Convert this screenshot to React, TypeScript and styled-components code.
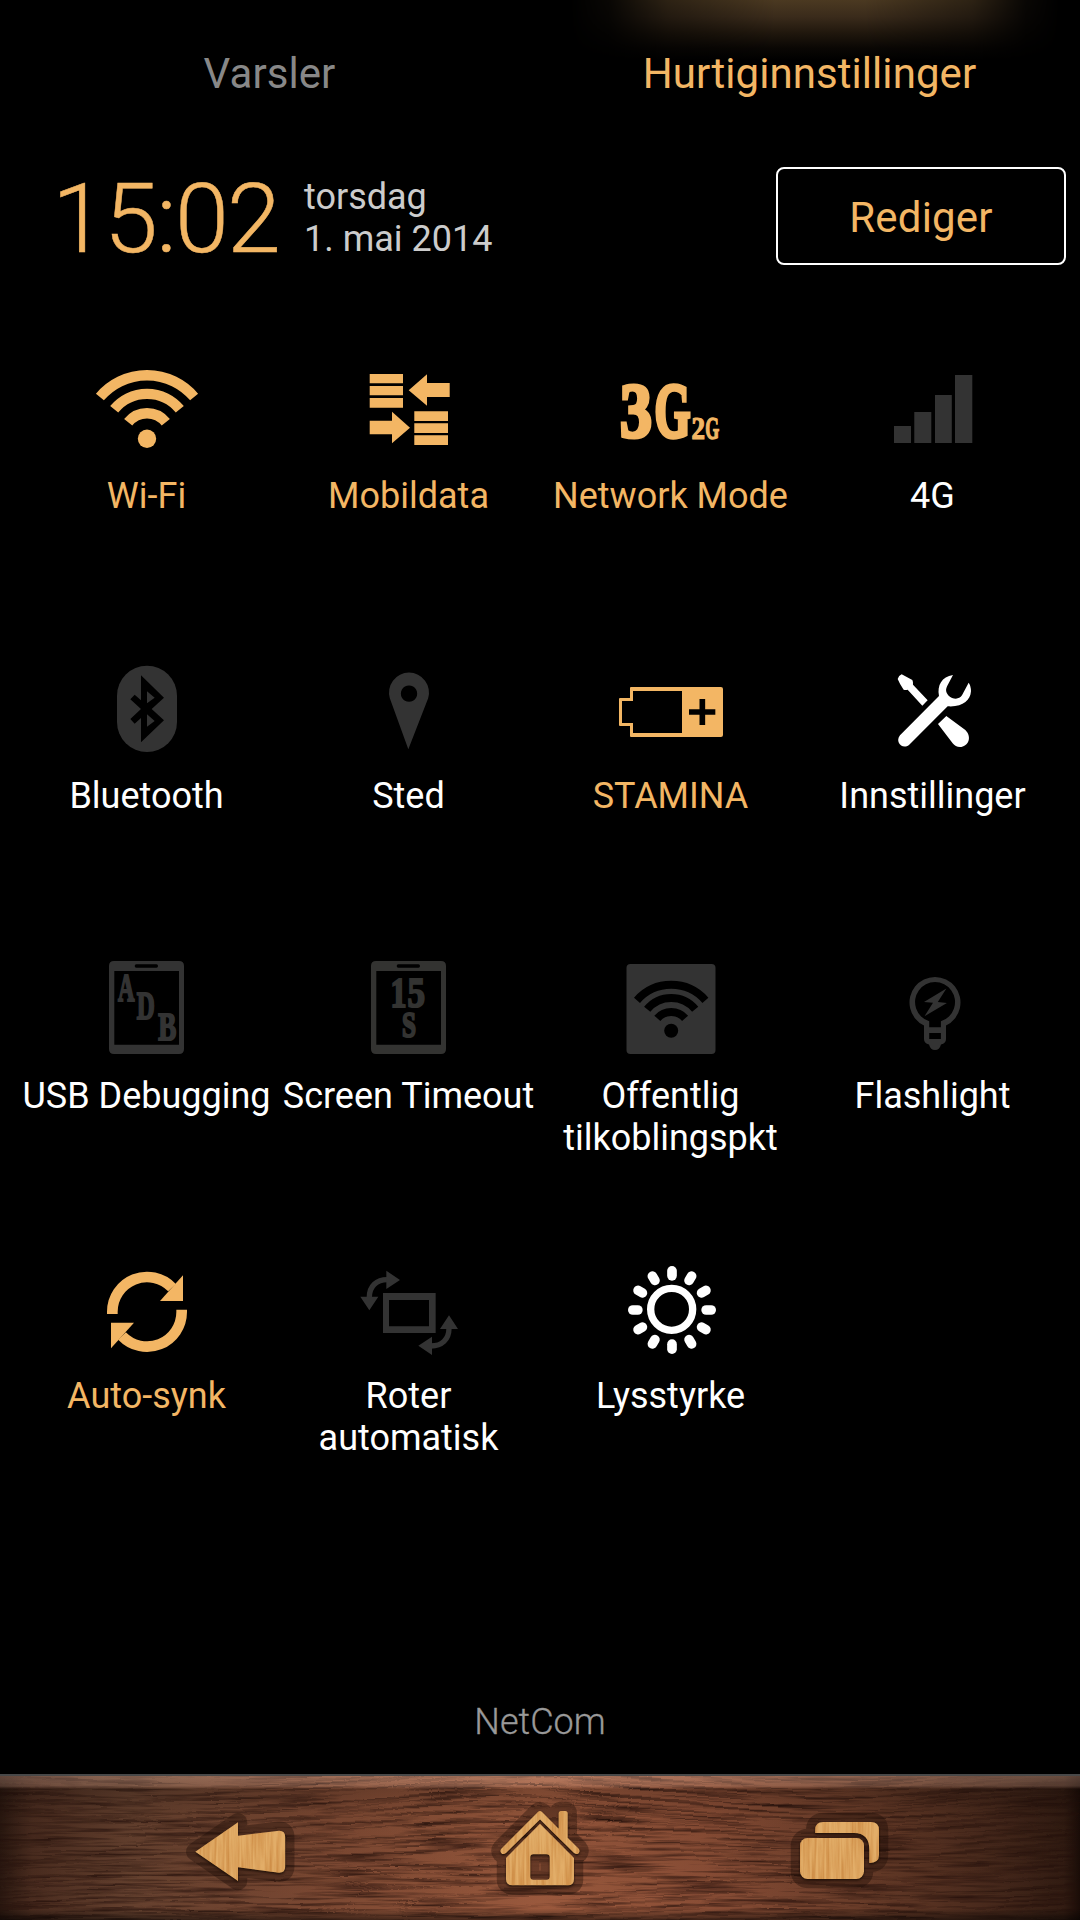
import React from 'react';
import styled, { createGlobalStyle } from 'styled-components';

const AMBER = '#f3b664';
const DIM = '#333333';
const WHITE = '#ffffff';

const GlobalStyle = createGlobalStyle`
  * { box-sizing: border-box; }
  body { margin: 0; background: #000; }
`;

const Screen = styled.div`
  display: flex;
  flex-direction: column;
  width: 1080px;
  height: 1920px;
  overflow: hidden;
  background: #000;
  color: ${WHITE};
  font-family: Roboto, 'Noto Sans', sans-serif;
  font-size: 36px;
  line-height: 42px;
`;

const Tabs = styled.nav`
  display: grid;
  grid-template-columns: 1fr 1fr;
  height: 147px;
`;

const Tab = styled.div<{ $active?: boolean }>`
  position: relative;
  display: flex;
  justify-content: center;
  padding: 49px 1px 0 0;
  font-size: 42px;
  line-height: 50px;
  color: ${(p) => (p.$active ? AMBER : '#888888')};
`;

const Glow = styled.span`
  position: absolute;
  top: 0;
  left: 30px;
  width: 490px;
  height: 60px;
  background: linear-gradient(to bottom, #4b3921 0%, #3a2b1b 28%, #20170d 55%, #0a0704 80%, #000 100%);
  mask-image: linear-gradient(to right, transparent, rgba(0, 0, 0, 0.12) 8%, rgba(0, 0, 0, 0.6) 20%, #000 42%, #000 60%, rgba(0, 0, 0, 0.6) 82%, rgba(0, 0, 0, 0.12) 93%, transparent);
`;

const TabText = styled.span`
  position: relative;
  letter-spacing: 0.07px;
`;

const Header = styled.header`
  display: flex;
  align-items: center;
  height: 138px;
  padding: 0 14px 0 52px;
`;

const Clock = styled.div`
  width: 252px;
  padding-top: 6px;
  font-size: 97px;
  font-weight: 300;
  line-height: 114px;
  letter-spacing: -1.7px;
  -webkit-text-stroke: 0.5px ${AMBER};
  color: ${AMBER};
`;

const DateText = styled.div`
  flex: 1;
  padding-top: 4px;
  color: #cccccc;
`;

const EditButton = styled.button`
  width: 290px;
  height: 98px;
  padding: 3px 0 0;
  border: 2px solid ${WHITE};
  border-radius: 8px;
  background: none;
  color: ${AMBER};
  font: inherit;
  font-size: 42px;
  letter-spacing: 0.2px;
`;

const Grid = styled.main`
  display: grid;
  grid-template-columns: repeat(4, 262px);
  grid-auto-rows: 300px;
  padding: 65px 16px 0;
  flex: 1;
`;

const Tile = styled.div<{ $color: string }>`
  display: flex;
  flex-direction: column;
  align-items: center;
  gap: 5px;
  color: ${(p) => p.$color};
`;

const TileLabel = styled.div`
  padding-right: 1px;
  text-align: center;
  white-space: pre;
`;

const TileIcon = styled.svg<{ $color: string }>`
  display: block;
  width: 120px;
  height: 120px;
  color: ${(p) => p.$color};
  fill: currentColor;
`;

const Carrier = styled.footer`
  height: 73px;
  text-align: center;
  font-weight: 300;
  -webkit-text-stroke: 0.3px #999999;
  color: #999999;
`;

const NavBar = styled.nav`
  position: relative;
  height: 146px;
  border-top: 2px solid #484848;
  display: grid;
  grid-template-columns: repeat(3, 300px);
  justify-content: center;
  align-items: center;
  justify-items: center;
`;

const WoodPanel = styled.svg`
  position: absolute;
  inset: 0;
  width: 1080px;
  height: 144px;
`;

const NavIcon = styled.svg`
  position: relative;
  width: 120px;
  height: 120px;
  overflow: visible;
`;

interface LetterProps {
  x: number;
  y: number;
  size: number;
  width: number;
  weight?: number;
  children: string;
}

const Letter = ({ x, y, size, width, weight = 2.2, children }: LetterProps) => (
  <text
    x={x}
    y={y}
    fontFamily="'Liberation Serif', serif"
    fontWeight={700}
    fontSize={size}
    textLength={width}
    lengthAdjust="spacingAndGlyphs"
    stroke="currentColor"
    strokeWidth={weight}
  >
    {children}
  </text>
);

const WifiIcon = () => (
  <>
    <g fill="none" stroke="currentColor" strokeWidth="10.4">
      <path d="M12.9 47A61.8 61.8 0 0 1 107.1 47" />
      <path d="M27.2 59.3A42.5 42.5 0 0 1 92.8 59.3" />
      <path d="M41.2 72.3A24 24 0 0 1 78.8 72.3" />
    </g>
    <circle cx="60" cy="88.7" r="9.2" />
  </>
);

const DataIcon = () => (
  <path d="M20.7 24H54V33.3H20.7ZM20.7 36H54V45.3H20.7ZM20.7 48H54V57.7H20.7ZM65.3 61.3H99V71H65.3ZM65.3 73.3H99V83H65.3ZM65.3 85.3H99V95H65.3ZM59.7 40.3L78 24.3V33H100.7V47H78V55.7ZM20.7 70.7H43V61.7L61 77.7L43 93.3V84.3H20.7Z" />
);

const NetworkIcon = () => (
  <>
    <Letter x={9} y={87.3} size={79} width={32} weight={4}>3</Letter>
    <Letter x={43.5} y={87.3} size={79} width={36} weight={4.5}>G</Letter>
    <Letter x={80.6} y={89.3} size={31} width={13.5} weight={1.2}>2</Letter>
    <Letter x={94.3} y={89.3} size={31} width={14} weight={1.4}>G</Letter>
  </>
);

const SignalIcon = () => (
  <path d="M21 76H38V93H21ZM41.3 62H58.3V93H41.3ZM62 45H78.8V93H62ZM82 25H99.3V93H82Z" />
);

const BluetoothIcon = () => (
  <>
    <rect x="30" y="15.7" width="60" height="86.4" rx="30" />
    <path
      transform="translate(-27 0) scale(.33333)"
      fill="#000"
      fillRule="evenodd"
      d="M243 76L312 143L275 177L312 211L243 277V204L224 221L211 207L243 177L211 148L224 134L243 151ZM261 124V160L284 143ZM261 193V230L284 213Z"
    />
  </>
);

const PinIcon = () => (
  <path
    transform="translate(-289 0) scale(.33333)"
    fillRule="evenodd"
    d="M989.500 145A60 60 0 1 1 1104.500 145L1045 298ZM1047 106.500a24.500 24.500 0 1 0 .1 0Z"
  />
);

const BatteryIcon = () => (
  <g transform="translate(-71 0) scale(.33333)">
    <path
      fillRule="evenodd"
      d="M273 111H543Q549 111 549 117V255Q549 261 543 261H273Q270 261 270 258V228H240Q237 228 237 225V147Q237 144 240 144H270V114Q270 111 273 111ZM279 123V153H246V219H279V249H426V123Z"
    />
    <path fill="none" stroke="#000" strokeWidth="17" d="M447 186H526M487 147V225" />
  </g>
);

const ToolsIcon = () => (
  <g transform="translate(-333 0) scale(.33333)">
    <path d="M1073 87Q1076 77 1085 73L1117 90Q1120 96 1119 104L1163 151L1147 167L1103 119Q1096 121 1091 119Q1079 102 1073 87Z" />
    <path d="M1219 198L1276 240C1298 262 1284 291 1260 291Q1246 291 1238 280L1194 222Z" />
    <path d="M1239 75C1205 80 1191 106 1197 138L1080 256C1064 276 1087 300 1107 285L1223 169C1268 172 1291 152 1293 124Q1293 107 1286 98L1266 136C1257 150 1238 148 1226 137C1216 125 1217 117 1222 107Z" />
  </g>
);

const Phone = () => (
  <path
    fillRule="evenodd"
    d="M27 11H92Q97 11 97 16V99Q97 104 92 104H27Q22 104 22 99V16Q22 11 27 11ZM27.300 21V94.700H92V21ZM49.200 14.300Q47.700 14.300 47.700 16T49.200 17.700H69.500Q71 17.700 71 16T69.500 14.300Z"
  />
);

const AdbIcon = () => (
  <>
    <Phone />
    <Letter x={30.9} y={51.300} size={40.500} width={16.500}>A</Letter>
    <Letter x={49.8} y={69} size={40.500} width={18}>D</Letter>
    <Letter x={71.200} y={90} size={40.500} width={18}>B</Letter>
  </>
);

const TimeoutIcon = () => (
  <>
    <Phone />
    <Letter x={41.500} y={57.300} size={42.500} width={16}>1</Letter>
    <Letter x={58.500} y={57.300} size={42.500} width={17.500}>5</Letter>
    <Letter x={53} y={87} size={35} width={14}>S</Letter>
  </>
);

const HotspotIcon = () => (
  <>
    <rect x="15.500" y="14" width="89" height="90" rx="4" />
    <g fill="none" stroke="#000" strokeWidth="8">
      <path d="M26 50.300A45.500 45.500 0 0 1 94.400 50.300" />
      <path d="M36.200 59.300A31.100 31.100 0 0 1 84.200 59.300" />
      <path d="M46.300 68.300A18.500 18.500 0 0 1 74.100 68.300" />
    </g>
    <circle cx="60.200" cy="80.700" r="7" fill="#000" />
  </>
);

const BulbIcon = () => (
  <>
    <path
      fillRule="evenodd"
      d="M51 75.500A25.500 25.500 0 1 1 73 75.500V89Q73 93.300 68 94.500Q66.500 100 62 100T56 94.500Q51 93.300 51 89ZM56.200 77.300H67.900V71.200A20 20 0 1 0 56.200 71.200ZM56.200 83V89H67.900V83Z"
    />
    <path d="M73.400 38.500L51 51.900L60 52.700L51.500 66.300L73.900 53L64.800 51.900Z" />
  </>
);

const SyncHalf = () => (
  <>
    <path fill="none" stroke="currentColor" strokeWidth="32" d="M157 192V185A104 104 0 0 1 336 113" />
    <path d="M369 76V153H300Z" />
  </>
);

const SyncIcon = () => (
  <g transform="translate(-27 0) scale(.33333)">
    <SyncHalf />
    <g transform="rotate(180 261 185.500)">
      <SyncHalf />
    </g>
  </g>
);

const RotateArrow = () => (
  <>
    <path fill="none" stroke="currentColor" strokeWidth="16" d="M928 142C928 108 950 89 982 89" />
    <path d="M979 62L1020 90L979 117ZM901 140H955L928 181Z" />
  </>
);

const RotateIcon = () => (
  <g transform="translate(-289 0) scale(.33333)">
    <path fillRule="evenodd" d="M969 129H1127V249H969ZM987 150V229H1107V150Z" />
    <RotateArrow />
    <g transform="rotate(180 1047.500 188.500)">
      <RotateArrow />
    </g>
  </g>
);

const rays = Array.from({ length: 12 }, (_, i) => i * 30);

const SunIcon = () => (
  <g
    transform="translate(-71 0) scale(.33333)"
    fill="none"
    stroke="currentColor"
    strokeLinecap="round"
  >
    <circle cx="395" cy="178" r="63" strokeWidth="22" />
    {rays.map((a) => (
      <path key={a} d="M396 62.500V77.500" strokeWidth="29" transform={`rotate(${a} 396 180)`} />
    ))}
  </g>
);

interface TileData {
  label: string;
  icon: React.ComponentType;
  iconColor: string;
  textColor: string;
}

const tiles: TileData[] = [
  { label: 'Wi-Fi', icon: WifiIcon, iconColor: AMBER, textColor: AMBER },
  { label: 'Mobildata', icon: DataIcon, iconColor: AMBER, textColor: AMBER },
  { label: 'Network Mode', icon: NetworkIcon, iconColor: AMBER, textColor: AMBER },
  { label: '4G', icon: SignalIcon, iconColor: DIM, textColor: WHITE },
  { label: 'Bluetooth', icon: BluetoothIcon, iconColor: DIM, textColor: WHITE },
  { label: 'Sted', icon: PinIcon, iconColor: DIM, textColor: WHITE },
  { label: 'STAMINA', icon: BatteryIcon, iconColor: AMBER, textColor: AMBER },
  { label: 'Innstillinger', icon: ToolsIcon, iconColor: WHITE, textColor: WHITE },
  { label: 'USB Debugging', icon: AdbIcon, iconColor: DIM, textColor: WHITE },
  { label: 'Screen Timeout', icon: TimeoutIcon, iconColor: '#333331', textColor: WHITE },
  { label: 'Offentlig\ntilkoblingspkt', icon: HotspotIcon, iconColor: DIM, textColor: WHITE },
  { label: 'Flashlight', icon: BulbIcon, iconColor: DIM, textColor: WHITE },
  { label: 'Auto-synk', icon: SyncIcon, iconColor: AMBER, textColor: AMBER },
  { label: 'Roter\nautomatisk', icon: RotateIcon, iconColor: DIM, textColor: WHITE },
  { label: 'Lysstyrke', icon: SunIcon, iconColor: WHITE, textColor: WHITE },
];

const Wood = () => (
  <WoodPanel viewBox="0 0 1080 144">
    <defs>
      <linearGradient id="woodBase">
        <stop offset="0" stopColor="#2a1810" />
        <stop offset=".03" stopColor="#4a2c1f" />
        <stop offset=".12" stopColor="#64402e" />
        <stop offset=".3" stopColor="#7b4832" />
        <stop offset=".5" stopColor="#9a593d" />
        <stop offset=".65" stopColor="#8a4e36" />
        <stop offset=".8" stopColor="#673b28" />
        <stop offset=".92" stopColor="#46281b" />
        <stop offset=".985" stopColor="#321c12" />
        <stop offset="1" stopColor="#1a0c07" />
      </linearGradient>
      <linearGradient id="woodEdge" x1="0" y1="0" x2="0" y2="1">
        <stop offset="0" stopColor="#ffd2bb" stopOpacity=".26" />
        <stop offset=".068" stopColor="#ffd2bb" stopOpacity=".18" />
        <stop offset=".09" stopColor="#000" stopOpacity=".2" />
        <stop offset=".28" stopColor="#000" stopOpacity=".06" />
        <stop offset=".92" stopColor="#000" stopOpacity="0" />
        <stop offset="1" stopColor="#000" stopOpacity=".5" />
      </linearGradient>
      <filter id="woodGrain" x="0" y="0" width="1" height="1" colorInterpolationFilters="sRGB">
        <feTurbulence type="fractalNoise" baseFrequency=".012 .3" numOctaves="4" seed="8" />
        <feColorMatrix type="matrix" values="0 0 0 0 .14  0 0 0 0 .06  0 0 0 0 .04  1.700 0 0 0 -.680" result="streaks" />
        <feTurbulence type="fractalNoise" baseFrequency=".003 .006" numOctaves="1" seed="5" result="bend" />
        <feDisplacementMap in="streaks" in2="bend" scale="55" xChannelSelector="R" yChannelSelector="G" />
      </filter>
      <filter id="iconGrain" x="-.1" y="-.1" width="1.2" height="1.2" colorInterpolationFilters="sRGB">
        <feTurbulence type="fractalNoise" baseFrequency=".3 .015" numOctaves="3" seed="3" />
        <feColorMatrix type="matrix" values="0 0 0 0 .76  0 0 0 0 .48  0 0 0 0 .2  1.400 0 0 0 -.500" result="g" />
        <feComposite in="g" in2="SourceAlpha" operator="in" result="gi" />
        <feMerge result="wood">
          <feMergeNode in="SourceGraphic" />
          <feMergeNode in="gi" />
        </feMerge>
        <feDropShadow in="wood" dx="0" dy="1.500" stdDeviation="1" floodColor="#1c0d06" floodOpacity=".9" />
      </filter>
    </defs>
    <rect width="1080" height="144" fill="url(#woodBase)" />
    <rect y="-40" width="1080" height="224" filter="url(#woodGrain)" />
    <rect width="1080" height="144" fill="url(#woodEdge)" />
  </WoodPanel>
);

/* Each nav shape is drawn twice: a wide dark outline carved in the wood, then the inlay. */
const Inlay = ({ children, outline = 18.5 }: { children: React.ReactNode; outline?: number }) => (
  <>
    <g opacity=".36" fill="#1a0b05" stroke="#1a0b05" strokeWidth={outline} strokeLinejoin="round">
      {children}
    </g>
    <g fill="#e2ad68" filter="url(#iconGrain)">{children}</g>
  </>
);

const App = () => (
  <>
    <GlobalStyle />
    <Screen>
      <Tabs>
        <Tab>
          <TabText>Varsler</TabText>
        </Tab>
        <Tab $active>
          <Glow />
          <TabText>Hurtiginnstillinger</TabText>
        </Tab>
      </Tabs>
      <Header>
        <Clock>15:02</Clock>
        <DateText>
          torsdag
          <br />
          1. mai 2014
        </DateText>
        <EditButton>Rediger</EditButton>
      </Header>
      <Grid>
        {tiles.map(({ label, icon: Icon, iconColor, textColor }) => (
          <Tile key={label} $color={textColor}>
            <TileIcon viewBox="0 0 120 120" $color={iconColor}>
              <Icon />
            </TileIcon>
            <TileLabel>{label}</TileLabel>
          </Tile>
        ))}
      </Grid>
      <Carrier>NetCom</Carrier>
      <NavBar>
        <Wood />
        <NavIcon viewBox="0 0 120 120">
          <Inlay>
            <path d="M15.300 63.700L58 34.300V47.700L99 42.700Q105.200 42.500 105.200 49V78.500Q105.200 85 99 84.700L58 79.300V93Z" />
          </Inlay>
        </NavIcon>
        <NavIcon viewBox="0 0 120 120">
          <Inlay>
            <path d="M58.200 23.800Q60 22.200 61.800 23.800L78.700 40.700V25.500Q78.700 23 81.200 23H85.200Q87.700 23 87.700 25.500V49.700L98.500 60.500Q100.500 63 98.700 65.200Q96.500 67 94 65L60 31.500L26 65Q23.500 67 21.300 65.200Q19.500 63 21.500 60.500Z" />
            <path
              fillRule="evenodd"
              d="M60 35.700L94 70V91.300Q94 97.300 88 97.300H32.500Q26 97.300 26 91.300V70ZM53.500 66.300Q50.300 66.300 50.300 69.500V88.500Q50.300 91.700 53.500 91.700H66.500Q69.700 91.700 69.700 88.500V69.500Q69.700 66.300 66.500 66.300Z"
            />
          </Inlay>
        </NavIcon>
        <NavIcon viewBox="0 0 120 120">
          <Inlay>
            <path d="M35.200 45V42Q35.200 34 43.200 34H91Q99 34 99 42V67Q99 75 89.300 75V62Q89.300 45 74 45Z" />
            <rect x="20" y="50" width="64" height="41" rx="7.500" />
          </Inlay>
        </NavIcon>
      </NavBar>
    </Screen>
  </>
);

export default App;
